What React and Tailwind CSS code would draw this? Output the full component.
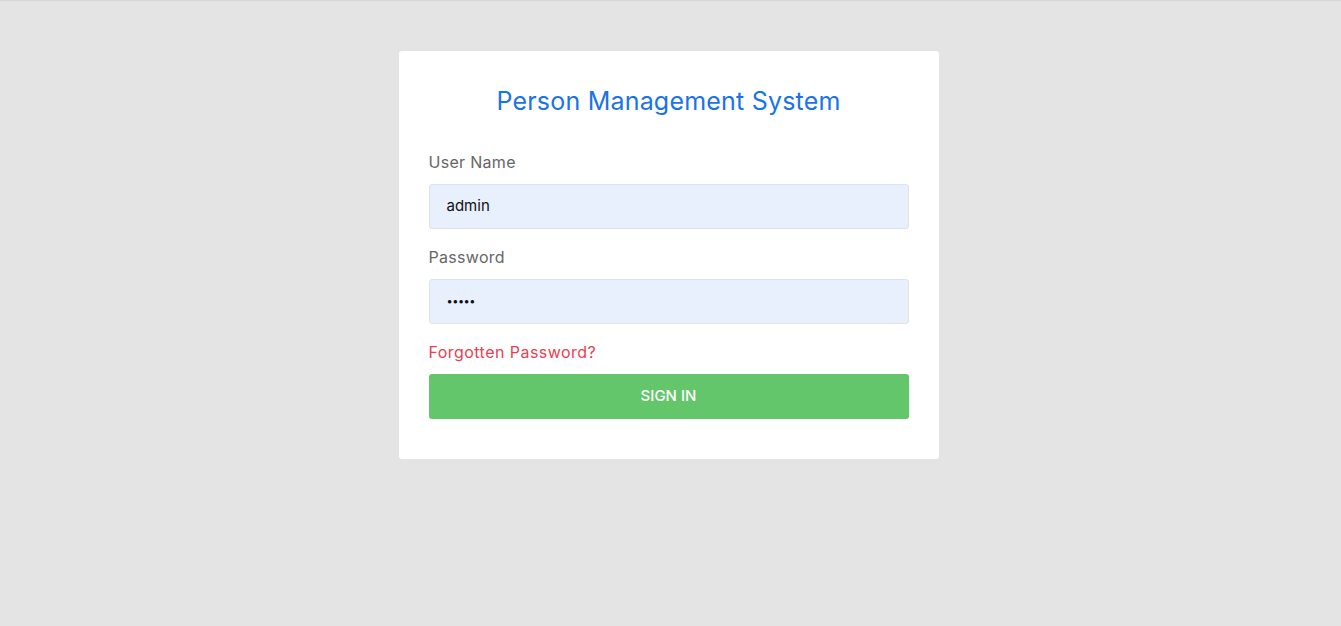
export default function App() {
  const font = { fontFamily: '"Inter", "Noto Sans", sans-serif' };
  return (
    <div className="min-h-[626px] w-full bg-[#e4e4e4] border-t border-[#d6d6d6]" style={font}>
      <div className="flex justify-center pt-[50px] pr-[4px]">
        <div className="w-[540px] bg-white rounded-[3px] px-[30px] pt-[32px] pb-[40px]">
          <h1 className="text-center text-[25px] leading-[36px] text-[#1a73e8] font-normal tracking-[0.2px]">Person Management System</h1>
          <div className="mt-[31px]">
            <label className="block text-[16px] leading-[24px] text-[#666666] tracking-[0.3px]">User Name</label>
            <div className="mt-[10px] h-[45px] bg-[#e8f0fe] border border-[#dfe3e8] rounded-[3px] flex items-center px-[17px] text-[15px] text-[#111]">admin</div>
          </div>
          <div className="mt-[16px]">
            <label className="block text-[16px] leading-[24px] text-[#666666] tracking-[0.3px]">Password</label>
            <div className="mt-[10px] h-[45px] bg-[#e8f0fe] border border-[#dfe3e8] rounded-[3px] flex items-center px-[17px] text-[11px] text-[#111] tracking-[-0.5px]">•••••</div>
          </div>
          <div className="mt-[16px] text-[16px] leading-[24px] text-[#e8414f] tracking-[0.45px]">Forgotten Password?</div>
          <button className="mt-[10px] w-full h-[45px] bg-[#64c66a] rounded-[3px] text-white text-[15px] font-medium">SIGN IN</button>
        </div>
      </div>
    </div>
  );
}
